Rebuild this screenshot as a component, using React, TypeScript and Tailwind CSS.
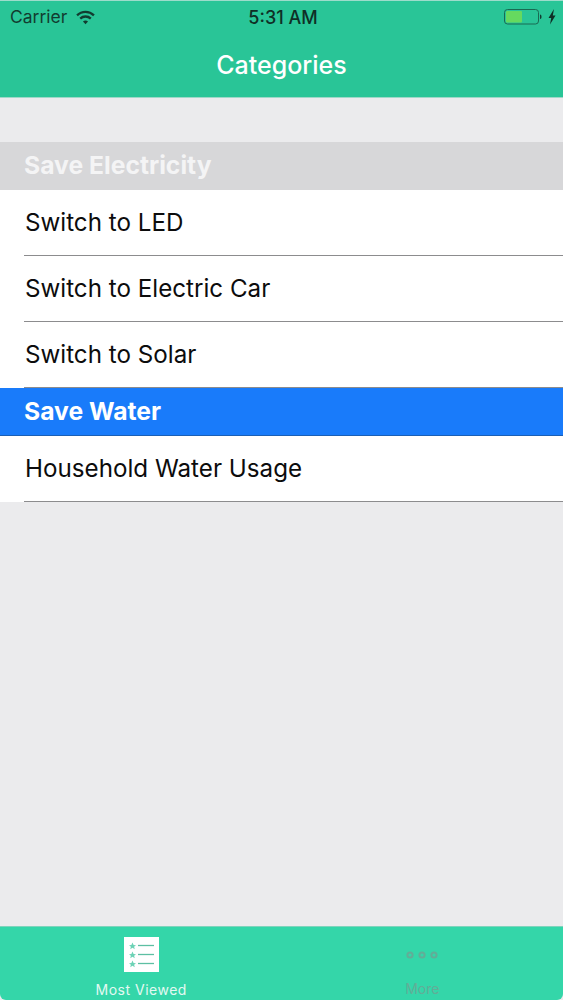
const rows1 = ["Switch to LED", "Switch to Electric Car", "Switch to Solar"];

function Row({ label }: { label: string }) {
  return (
    <div className="bg-white h-[66px] pl-6">
      <div className="h-full flex items-center border-b border-[#8c8c8e] text-[24.2px] pl-px pt-0.5 text-[#0c0c0c]">
        {label}
      </div>
    </div>
  );
}

function SectionHeader({ label, className }: { label: string; className: string }) {
  return (
    <div className={`h-12 flex items-center pl-6 text-[24.7px] font-bold ${className}`}>
      {label}
    </div>
  );
}

function WifiIcon() {
  return (
    <svg width="19" height="15" viewBox="0 0 18 14" fill="none" stroke="#123c30" strokeWidth="2.2">
      <path d="M1 5 C5.5 0.6 12.5 0.6 17 5" />
      <path d="M4 8 C6.8 5.4 11.2 5.4 14 8" />
      <path d="M9 13.4 L6.6 10.8 C8 9.6 10 9.6 11.4 10.8 Z" fill="#123c30" stroke="none" />
    </svg>
  );
}

function BatteryIcon() {
  return (
    <svg width="52" height="18" viewBox="0 0 52 18" fill="none">
      <rect x="0.5" y="1.5" width="34" height="14.5" rx="3" stroke="#1a6a52" strokeWidth="1" />
      <rect x="2" y="3" width="16" height="11.5" rx="1" fill="#66d95f" />
      <path d="M36 6.5 C37 6.5 37.5 7.5 37.5 8.7 C37.5 10 37 11 36 11 Z" fill="#123c30" />
      <path d="M50 1 L44.5 10 H47.2 L46 16.5 L51.5 7.5 H48.8 Z" fill="#0f2f26" />
    </svg>
  );
}

function ListIcon() {
  return (
    <svg width="35" height="35" viewBox="0 0 35 35">
      <rect width="35" height="35" fill="#ffffff" />
      <g fill="#6dd3b6">
        <path d="M8.5 5.5 L9.6 8 L12 8.2 L10.1 9.8 L10.8 12.2 L8.5 10.8 L6.2 12.2 L6.9 9.8 L5 8.2 L7.4 8 Z" />
        <path d="M8.5 14.5 L9.6 17 L12 17.2 L10.1 18.8 L10.8 21.2 L8.5 19.8 L6.2 21.2 L6.9 18.8 L5 17.2 L7.4 17 Z" />
        <path d="M8.5 23.5 L9.6 26 L12 26.2 L10.1 27.8 L10.8 30.2 L8.5 28.8 L6.2 30.2 L6.9 27.8 L5 26.2 L7.4 26 Z" />
      </g>
      <g stroke="#5dbfa3" strokeWidth="1.3">
        <path d="M14 8.5 H30" />
        <path d="M14 17.5 H30" />
        <path d="M14 26.5 H30" />
      </g>
    </svg>
  );
}

function MoreIcon() {
  return (
    <svg width="34" height="10" viewBox="0 0 34 10" fill="none" stroke="#62ad97" strokeWidth="2">
      <circle cx="5" cy="5" r="2.6" />
      <circle cx="17" cy="5" r="2.6" />
      <circle cx="29" cy="5" r="2.6" />
    </svg>
  );
}

export default function App() {
  return (
    <div
      className="w-[563px] h-[1000px] flex flex-col bg-[#ebebed] overflow-hidden"
      style={{ fontFamily: "Inter, 'Noto Sans', sans-serif" }}
    >
      <header className="h-[98px] shrink-0 bg-[#29c597] border-t border-[#9ddccb] border-b-[#9fd8c8] border-b">
        <div className="h-[32px] relative flex items-center justify-between pl-2.5 pr-[7px]">
          <div className="flex items-center gap-[9px] text-[17.5px] text-[#123c30]">
            Carrier
            <WifiIcon />
          </div>
          <div className="absolute left-0 right-0 pl-[3px] text-center text-[18px] font-medium text-[#0f2f26]">5:31 AM</div>
          <BatteryIcon />
        </div>
        <div className="h-[64px] flex items-center justify-center text-[25px] font-medium text-white pt-0.5">
          Categories
        </div>
      </header>

      <main className="flex-1 pt-11">
        <SectionHeader label="Save Electricity" className="bg-[#d7d7d9] text-[#f4f4f5]" />
        {rows1.map((r) => (
          <Row key={r} label={r} />
        ))}
        <SectionHeader label="Save Water" className="bg-[#197bfa] text-white border-b border-[#1b5fb5]" />
        <Row label="Household Water Usage" />
      </main>

      <nav className="h-[74px] shrink-0 bg-[#34d6a9] border-t border-[#7fd3bc] grid grid-cols-2 rounded-b-md">
        <div className="flex flex-col items-center pt-[10px] pl-px">
          <ListIcon />
          <span className="mt-[7px] text-[14px] tracking-[0.5px] text-[#e3f9f2]">Most Viewed</span>
        </div>
        <div className="flex flex-col items-center pt-[23px]">
          <MoreIcon />
          <span className="mt-[18px] text-[14px] text-[#62ad97]">More</span>
        </div>
      </nav>
    </div>
  );
}
